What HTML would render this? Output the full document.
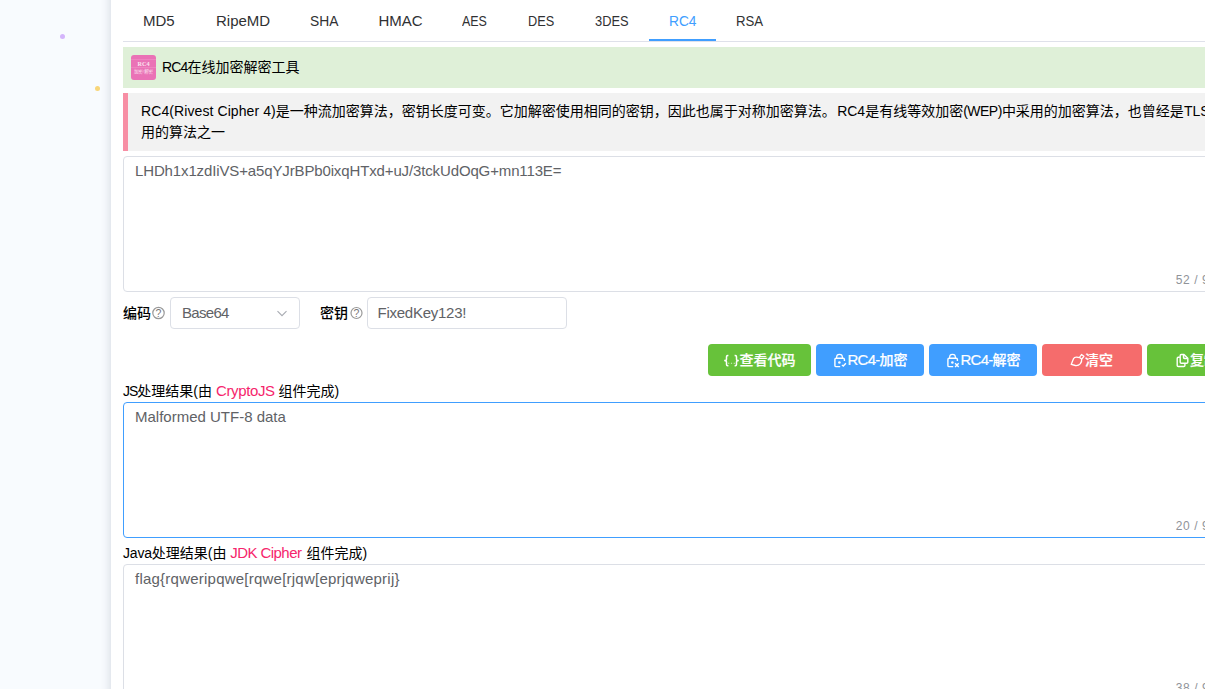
<!DOCTYPE html>
<html lang="zh-CN">
<head>
<meta charset="utf-8">
<title>RC4在线加密解密工具</title>
<style>
*{box-sizing:border-box;margin:0;padding:0}
html,body{width:1205px;height:689px;overflow:hidden}
body{position:relative;background:#f8fbfe;font-family:"Liberation Sans","Noto Sans CJK SC",sans-serif;font-size:14px;color:#000}
.abs{position:absolute;white-space:nowrap}
#main{position:absolute;left:111px;top:-20px;width:1114px;height:729px;background:#fff;box-shadow:-1px 0 9px rgba(40,50,80,.16)}
.dot{position:absolute;border-radius:50%}
.tab{position:absolute;transform-origin:0 0;top:11px;font-size:15px;line-height:20px;color:#303133;white-space:nowrap}
.tab.on{color:#409eff}
#tabline{position:absolute;left:123px;top:41px;width:1082px;height:1px;background:#dfe1ea}
#tabact{position:absolute;left:649px;top:39px;width:67px;height:2px;background:#409eff}
#banner{position:absolute;left:123px;top:47px;width:1082px;height:41px;background:#dff0d8}
#ico{position:absolute;left:131px;top:55px;width:25px;height:25px;border-radius:3px;background:#ea72b6;overflow:hidden;color:#fbe3f0;text-align:center;font-family:"Liberation Serif","Noto Serif CJK SC",serif}
#ico i{position:absolute;left:0;width:25px;height:1px;background:#ee84c0}
#ico b{position:absolute;left:0;width:25px;font-weight:bold;font-style:normal;line-height:1;white-space:nowrap}
#desc{position:absolute;left:123px;top:93px;width:1082px;height:58px;background:#f2f2f2;border-left:5px solid #f78ea4}
.ta{position:absolute;left:123px;width:1100px;height:136px;border:1px solid #dcdfe6;border-radius:4px;background:#fff}
.ta.focus{border-color:#409eff}
.tatext{position:absolute;left:135px;font-size:15px;line-height:20px;color:#606266;white-space:nowrap}
.cnt{position:absolute;left:1175.7px;font-size:12px;line-height:14px;color:#909399;white-space:nowrap;letter-spacing:.6px}
.lbl{position:absolute;left:123px;font-size:14px;line-height:20px;color:#000;white-space:nowrap}
.lbl code{font-family:inherit;color:#f6256c;font-size:15px}
.fl{font-weight:500}
.inp{position:absolute;top:297px;height:32px;border:1px solid #dcdfe6;border-radius:4px;background:#fff}
.inp span{position:absolute;top:5px;font-size:15px;line-height:20px;color:#606266;white-space:nowrap}
.btn{position:absolute;top:344px;height:32px;border-radius:4px;color:#fff;font-size:14px;line-height:32px;white-space:nowrap;font-weight:500}
.btn span{position:absolute;top:0;-webkit-text-stroke:.2px #fff}
.btn em{font-style:normal;font-size:15px;letter-spacing:-.75px}
.btn svg{position:absolute;left:0;top:0;overflow:visible}
.g{background:#67c23a}.b{background:#409eff}.r{background:#f56c6c}
</style>
</head>
<body>
<div class="dot" style="left:60px;top:33.5px;width:5px;height:5px;background:#d4b5fb"></div>
<div class="dot" style="left:95px;top:85.5px;width:5px;height:5px;background:#f8d67a"></div>
<div id="main"></div>

<div class="tab" id="t1" style="left:143px">MD5</div>
<div class="tab" id="t2" style="left:216px">RipeMD</div>
<div class="tab" id="t3" style="left:309.7px;transform:scaleX(0.92)">SHA</div>
<div class="tab" id="t4" style="left:378.5px">HMAC</div>
<div class="tab" id="t5" style="left:462.1px;transform:scaleX(0.83)">AES</div>
<div class="tab" id="t6" style="left:527.6px;transform:scaleX(0.85)">DES</div>
<div class="tab" id="t7" style="left:594.6px;transform:scaleX(0.856)">3DES</div>
<div class="tab on" id="t8" style="left:668.8px;transform:scaleX(0.917)">RC4</div>
<div class="tab" id="t9" style="left:735.5px;transform:scaleX(0.88)">RSA</div>
<div id="tabline"></div>
<div id="tabact"></div>

<div id="banner"></div>
<div id="ico"><i style="top:4px"></i><i style="top:12px"></i><b style="top:5.6px;font-size:6.2px">RC4</b><b style="top:14.9px;font-size:4.5px;font-weight:500">加密/解密</b></div>
<div class="abs" id="title" style="left:162px;top:57px;font-size:14px;line-height:20px"><span id="titleL" style="letter-spacing:-.8px">RC4</span>在线加密解密工具</div>

<div id="desc"></div>
<div class="abs" id="d1" style="left:141px;top:101px;font-size:14px;line-height:20px"><span id="d1a" style="letter-spacing:.09px">RC4(Rivest Cipher 4)</span>是一种流加密算法，密钥长度可变。它加解密使用相同的密钥，因此也属于对称加密算法。<span id="d1b" style="margin-left:1.3px">RC4</span>是有线等效加密<span id="d1c" style="letter-spacing:-.5px">(WEP)</span>中采用的加密算法，也曾经是<span id="d1d">TLS</span>可采</div>
<div class="abs" id="d2" style="left:141px;top:122px;font-size:14px;line-height:20px">用的算法之一</div>

<div class="ta" style="top:156px"></div>
<div class="tatext" id="x1" style="top:161px;letter-spacing:-.133px">LHDh1x1zdIiVS+a5qYJrBPb0ixqHTxd+uJ/3tckUdOqG+mn113E=</div>
<div class="cnt" id="c1" style="top:273px">52 / 9999</div>

<div class="lbl fl" id="l1" style="top:303px">编码</div>
<svg class="abs" style="left:151px;top:305px" width="16" height="16" viewBox="0 0 16 16"><circle cx="7.5" cy="8" r="5.7" fill="none" stroke="#999" stroke-width="1.2"/><text x="7.5" y="11.7" font-size="10.5" text-anchor="middle" fill="#777" font-family="Liberation Sans, sans-serif">?</text></svg>
<div class="inp" style="left:170px;width:130px"><span id="sel" style="left:11px;letter-spacing:-.7px">Base64</span>
<svg style="position:absolute;left:105px;top:12px" width="12" height="8" viewBox="0 0 12 8"><path d="M1.5 1.2 L6 5.7 L10.5 1.2" fill="none" stroke="#a8abb2" stroke-width="1.1"/></svg></div>
<div class="lbl fl" id="l2" style="left:320px;top:303px">密钥</div>
<svg class="abs" style="left:348.7px;top:305px" width="16" height="16" viewBox="0 0 16 16"><circle cx="7.5" cy="8" r="5.5" fill="none" stroke="#999" stroke-width="1.2"/><text x="7.5" y="11.7" font-size="10.5" text-anchor="middle" fill="#777" font-family="Liberation Sans, sans-serif">?</text></svg>
<div class="inp" style="left:367px;width:200px"><span id="key" style="left:9.5px;letter-spacing:-.25px">FixedKey123!</span></div>

<div class="btn g" style="left:708px;width:103px">
<svg width="30" height="32" viewBox="0 0 30 32"><g transform="translate(10,4)" fill="none" stroke="#fff" stroke-width="1.5"><path d="M10.4 7.6H9.7Q8.5 7.6 8.5 8.8V11.2Q8.5 12.6 6.2 12.6Q8.5 12.6 8.5 14V16.6Q8.5 17.8 9.7 17.8H10.4"/><path d="M16.6 7.6H17.3Q18.5 7.6 18.5 8.8V11.2Q18.5 12.6 20.8 12.6Q18.5 12.6 18.5 14V16.6Q18.5 17.8 17.3 17.8H16.6"/><g stroke="none" fill="#fff" opacity=".55"><rect x="10.1" y="14.7" width="1.2" height="1.3"/><rect x="12.9" y="14.7" width="1.2" height="1.3"/><rect x="15.7" y="14.7" width="1.2" height="1.3"/></g></g></svg>
<span id="b1" style="left:31.5px">查看代码</span></div>
<div class="btn b" style="left:816px;width:108px">
<svg width="32" height="32" viewBox="0 0 32 32"><g transform="translate(12,4)" fill="none" stroke="#fff" stroke-width="1.4"><path d="M16.4 13V11.4Q16.4 10.2 15.2 10.2H8.1Q6.9 10.2 6.9 11.4V17.4Q6.9 18.6 8.1 18.6H12.2"/><path d="M8.6 10.2V9.3A2.9 2.9 0 0 1 14.4 9.3V10.2" stroke-width="1.2"/><circle cx="11.4" cy="14.5" r="1.3" fill="#fff" stroke="none"/><path d="M13.9 17L15.3 18L17.9 15.2"/></g></svg>
<span id="b2" style="left:31.5px"><em>RC4-</em>加密</span></div>
<div class="btn b" style="left:929px;width:108px">
<svg width="32" height="32" viewBox="0 0 32 32"><g transform="translate(12,4)" fill="none" stroke="#fff" stroke-width="1.4"><path d="M16.4 13V11.4Q16.4 10.2 15.2 10.2H8.1Q6.9 10.2 6.9 11.4V17.4Q6.9 18.6 8.1 18.6H12.2"/><path d="M8.6 10.2V9.3A2.9 2.9 0 0 1 14.4 9.3V10.2" stroke-width="1.2"/><circle cx="11.4" cy="14.5" r="1.3" fill="#fff" stroke="none"/><path d="M14.1 15.3L17.7 18.9M17.7 15.3L14.1 18.9"/></g></svg>
<span id="b3" style="left:31.5px"><em>RC4-</em>解密</span></div>
<div class="btn r" style="left:1042px;width:100px">
<svg width="44" height="32" viewBox="0 0 44 32"><g transform="translate(23,4)" fill="none" stroke="#fff" stroke-width="1.3" stroke-linejoin="round"><path d="M6.2 16.4L8.4 10.9Q9.4 9 11.6 9.1L14.6 9.6L16.6 11.1Q17 13.6 15.4 15.6Q13.4 17.9 10.4 17.5Z"/><path d="M14.4 9.5L16.5 6.5L18.9 8.3L16.8 11.2"/></g></svg>
<span id="b4" style="left:43px">清空</span></div>
<div class="btn g" style="left:1147px;width:100px">
<svg width="44" height="32" viewBox="0 0 44 32"><g transform="translate(23,4)" fill="none" stroke="#fff" stroke-width="1.4" stroke-linejoin="round"><path d="M10.2 7.6Q10.2 6.5 11.3 6.5H14L17.8 10.2V14.2Q17.8 15.3 16.7 15.3H11.3Q10.2 15.3 10.2 14.2Z"/><path d="M13.6 6.8V9.6Q13.6 10.5 14.5 10.5H17.4" stroke-width="1.6"/><path d="M9.8 9.3H8.3Q7.2 9.3 7.2 10.4V17.4Q7.2 18.5 8.3 18.5H13.8Q14.9 18.5 14.9 17.4V15.6"/></g></svg>
<span id="b5" style="left:43px">复制</span></div>

<div class="lbl" id="l3" style="top:381px"><span id="l3a" style="letter-spacing:-1px">JS</span>处理结果(由 <code id="l3b" style="letter-spacing:-.36px">CryptoJS</code> 组件完成)</div>
<div class="ta focus" style="top:402px"></div>
<div class="tatext" id="x2" style="top:407px;letter-spacing:0px">Malformed UTF-8 data</div>
<div class="cnt" id="c2" style="top:519px">20 / 9999</div>

<div class="lbl" id="l4" style="top:543px"><span id="l4a" style="letter-spacing:-.2px">Java</span>处理结果(由 <code id="l4b" style="letter-spacing:-.57px;margin-right:1.2px">JDK Cipher</code> 组件完成)</div>
<div class="ta" style="top:564px"></div>
<div class="tatext" id="x3" style="top:569px;letter-spacing:.23px">flag{rqweripqwe[rqwe[rjqw[eprjqweprij}</div>
<div class="cnt" id="c3" style="top:681px">38 / 9999</div>
</body>
</html>
